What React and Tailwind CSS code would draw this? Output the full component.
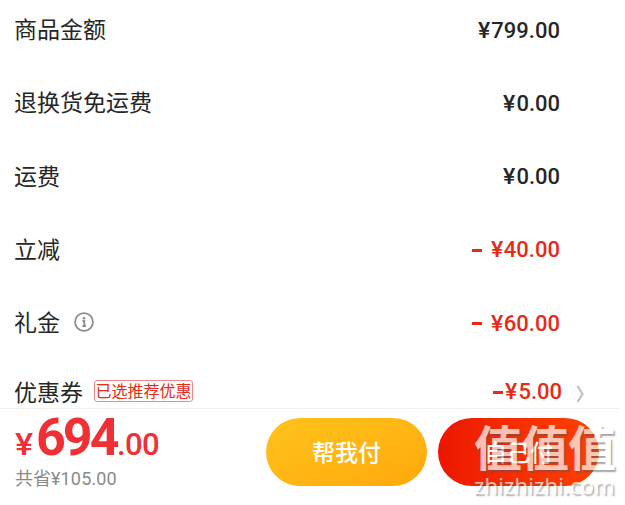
const rows = [
  { label: '商品金额', value: '799.00' },
  { label: '退换货免运费', value: '0.00' },
  { label: '运费', value: '0.00' },
  { label: '立减', value: '40.00', minus: true },
  { label: '礼金', value: '60.00', minus: true, info: true },
]

function InfoIcon() {
  return (
    <svg width="20" height="20" viewBox="0 0 20 20" fill="none" className="-mt-[3px] ml-[14px]">
      <circle cx="10" cy="10" r="8.9" stroke="#8c8c8c" strokeWidth="1.8" />
      <path d="M8.5 9h1.8v5M8.5 14h3.4" stroke="#8c8c8c" strokeWidth="1.8" />
      <circle cx="10" cy="6.2" r="1.3" fill="#8c8c8c" />
    </svg>
  )
}

function Yen() {
  return <span className="inline-block w-[13px] origin-left scale-x-105">¥</span>
}

function PriceRow({ label, value, minus, info }) {
  return (
    <div className="flex h-[73.3px] items-start justify-between">
      <div className="flex h-[61px] items-center">
        <span className="-mt-[4px]">{label}</span>
        {info && <InfoIcon />}
      </div>
      <div className={`flex h-[61px] items-center font-['Roboto'] text-[22px] font-medium ${minus ? 'text-[#e62a16]' : ''}`}>
        {minus && <span className="mr-[9px] h-[2.5px] w-[10px] bg-[#e62a16]" />}
        <Yen />
        {value}
      </div>
    </div>
  )
}

function Watermark() {
  return (
    <div className="pointer-events-none absolute left-[474px] top-[418px] whitespace-nowrap text-white opacity-70 [text-shadow:1.5px_1.5px_1.5px_rgba(90,90,90,0.75)]">
      <div className="text-[48px] font-bold leading-[54px] tracking-[-1px]">值值值</div>
      <div className="font-['Open_Sans'] text-[22px] font-medium leading-[26px] tracking-[0.22px]">zhizhizhi.com</div>
    </div>
  )
}

export default function App() {
  return (
    <div className="relative h-[505px] w-[625px] overflow-hidden bg-white font-['Noto_Sans_CJK_SC',sans-serif] text-[23px] leading-none text-[#262626]">
      <div className="h-[408px] pl-[14px] pr-[65px]">
        {rows.map((row) => (
          <PriceRow key={row.label} {...row} />
        ))}
        <div className="mr-[-25px] flex h-[50px] items-center">
          <span>优惠券</span>
          <span className="ml-[11px] flex h-[22px] w-[99px] items-center justify-center rounded-[3px] border border-[#f08a80] pb-[2px] text-[16px] text-[#e62a16]">
            已选推荐优惠
          </span>
          <span className="ml-auto mt-[2px] flex items-center font-['Roboto'] text-[22px] font-medium text-[#e62a16]">
            <span className="mr-[2px] h-[2.5px] w-[10px] bg-[#e62a16]" />
            <Yen />
            5.00
          </span>
          <svg width="9" height="18" viewBox="0 0 9 18" fill="none" className="ml-[14px] mt-[5px]">
            <path d="M1.5 1l5 8-5 8" stroke="#c0c0c0" strokeWidth="2.2" />
          </svg>
        </div>
      </div>

      {/* Checkout bar */}
      <div className="flex h-[97px] w-[619px] border-t border-[#eeeeee] pl-[15px]">
        <div className="w-[251px]">
          <div className="flex items-baseline pt-[5px] font-['Roboto'] leading-[48px] text-[#f03035]">
            <span className="w-[21px] origin-left scale-x-110 text-[31px] font-medium">¥</span>
            <span className="w-[81px] text-[52px] font-bold tracking-[-3px]">694</span>
            <span className="text-[31px] font-medium tracking-[-0.6px]">.00</span>
          </div>
          <div className="-mt-[1px] text-[18px] text-[#8a8a8a]">
            共省<span className="font-['Roboto'] tracking-[0.15px]">¥105.00</span>
          </div>
        </div>
        <button className="mt-[9px] h-[68px] w-[161px] rounded-full bg-linear-to-br from-[#ffc31a] to-[#ffa90b] pb-[1px] font-medium text-white">
          帮我付
        </button>
        <button className="ml-[11px] mt-[9px] h-[68px] w-[161px] rounded-full bg-linear-to-r from-[#ed1500] to-[#ff4000] pb-[1px] font-medium text-white">
          自己付
        </button>
      </div>
      <Watermark />
    </div>
  )
}
